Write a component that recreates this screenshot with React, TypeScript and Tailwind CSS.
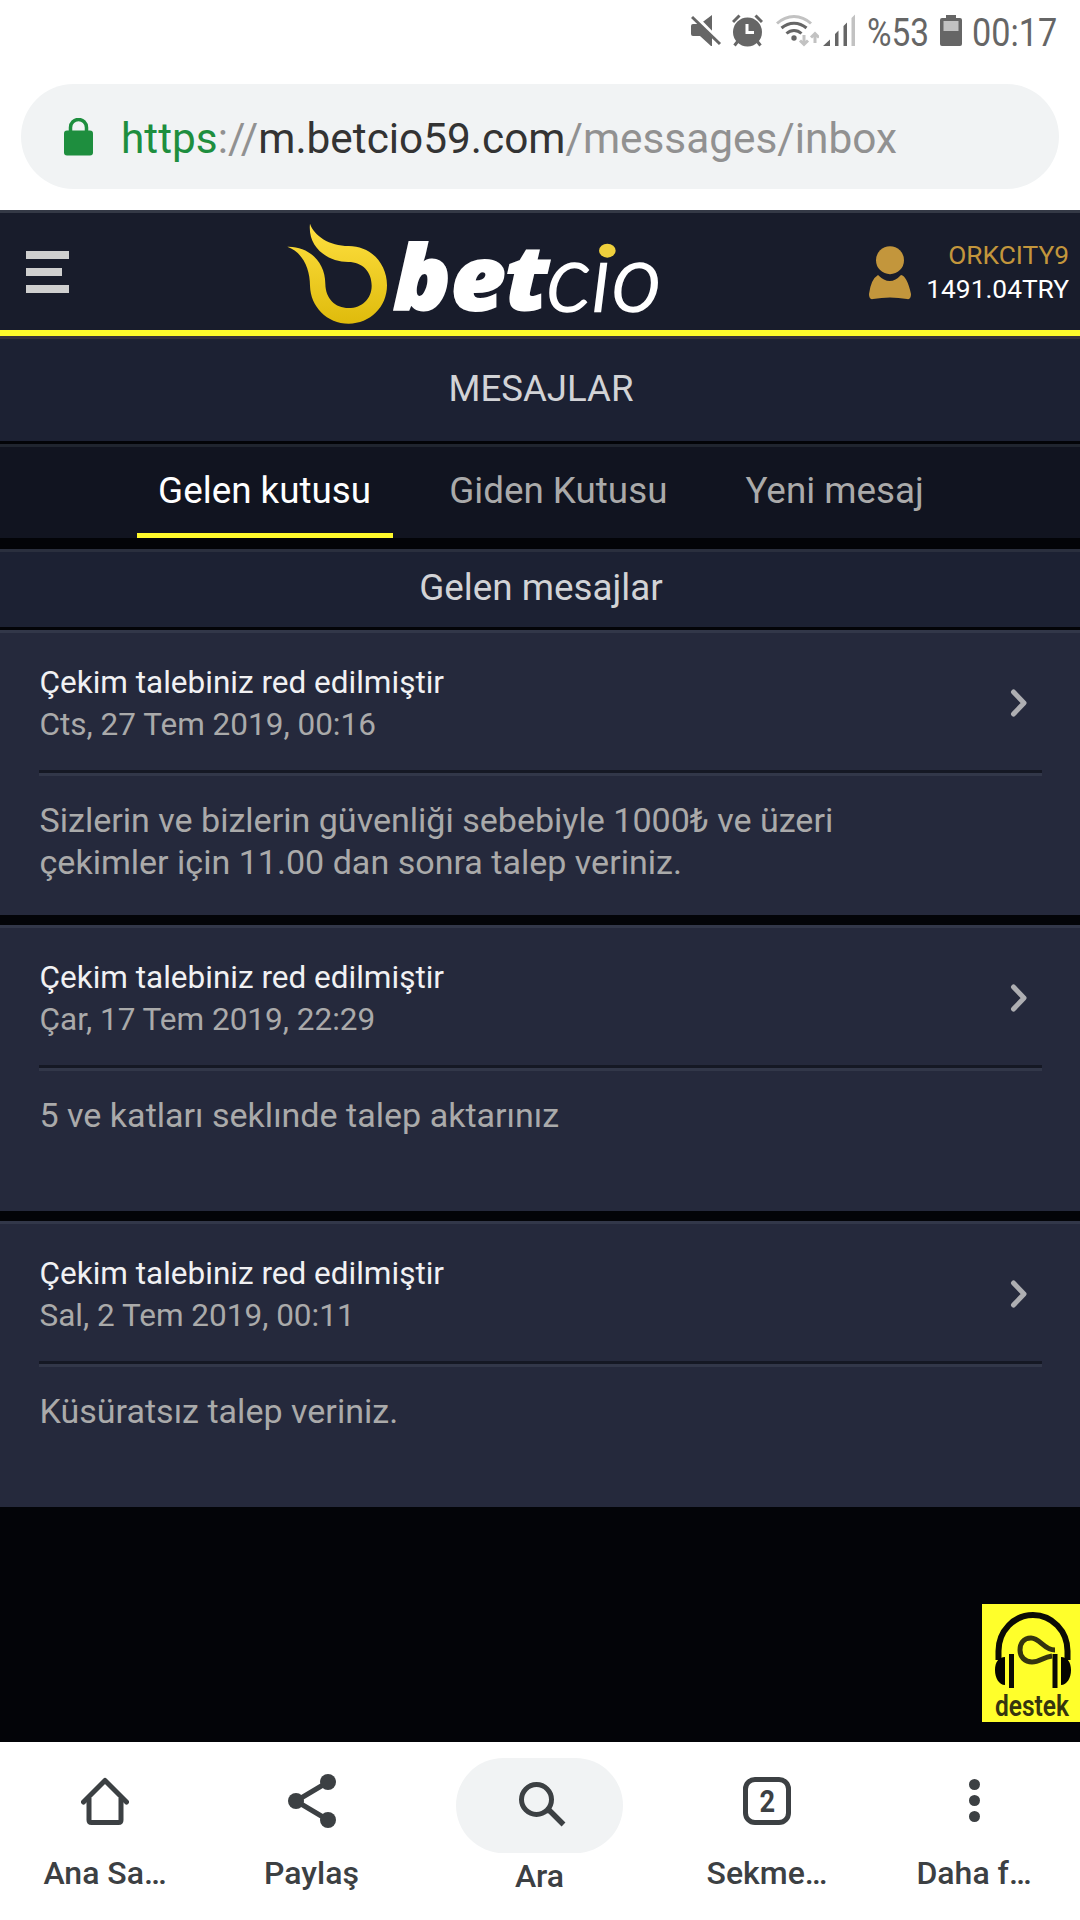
import type { ReactNode } from 'react';

type Message = {
  title: string;
  date: string;
  body: string;
};

const messages: Message[] = [
  {
    title: 'Çekim talebiniz red edilmiştir',
    date: 'Cts, 27 Tem 2019, 00:16',
    body: 'Sizlerin ve bizlerin güvenliği sebebiyle 1000₺ ve üzeri çekimler için 11.00 dan sonra talep veriniz.',
  },
  {
    title: 'Çekim talebiniz red edilmiştir',
    date: 'Çar, 17 Tem 2019, 22:29',
    body: '5 ve katları seklınde talep aktarınız',
  },
  {
    title: 'Çekim talebiniz red edilmiştir',
    date: 'Sal, 2 Tem 2019, 00:11',
    body: 'Küsüratsız talep veriniz.',
  },
];

function StatusBar() {
  return (
    <div className="flex h-[84px] items-start justify-end pr-[21px] pt-[14px] text-[38px] leading-[39px] text-[#666]">
      <svg className="mr-[10px] h-[33px] w-[31px]" viewBox="691 14 31 33" fill="#666">
        <path d="M691 26q0-2 2-2h7l12-9v31h-1l-11-10h-7q-2 0-2-2z" />
        <path d="M692 13l30 31" stroke="#fff" strokeWidth="4" />
        <path d="M692 17l28 27" stroke="#666" strokeWidth="3" />
      </svg>
      <svg className="mr-[13px] h-[33px] w-[31px]" viewBox="733 14 31 33" fill="none">
        <circle cx="748.5" cy="32" r="14.5" fill="#666" />
        <path d="M734 22l6.500-6.500M763 22l-6.500-6.500M739 41l-3.500 4.500M758 41l3.500 4.500" stroke="#666" strokeWidth="3" />
        <path d="M748 24v8.500h7" stroke="#fff" strokeWidth="3" />
      </svg>
      <svg className="mr-[4px] h-[33px] w-[43px]" viewBox="777 14 43 33" fill="none">
        <path d="M778 23.500c10-9.500 24-9.500 34 0" stroke="#c2c2c2" strokeWidth="3" />
        <path d="M782.500 28c7.500-6.500 17.500-6.500 25 0M787.500 33.500c4.500-4 10.500-4 15 0" stroke="#666" strokeWidth="3" />
        <circle cx="795" cy="38" r="2.700" fill="#666" />
        <path d="M805 35v9M801 40.500l4 4 4-4M816 43v-9M812 37.500l4-4 4 4" stroke="#c2c2c2" strokeWidth="3" />
      </svg>
      <svg className="mr-[11px] h-[33px] w-[33px]" viewBox="825 14 33 33">
        <path d="M825 46l7-6.500V46zM837 34l3.500-3.500V46H837zM845.500 26l3.500-3.500V46h-3.500z" fill="#666" />
        <path d="M853.500 18l3.500-3.500V46h-3.500z" fill="#c2c2c2" />
      </svg>
      <span className="w-[73px] origin-left scale-x-[0.88]">%53</span>
      <svg className="mr-[10px] h-[33px] w-[22px]" viewBox="944 14 22 33">
        <path d="M950 15h10v3h4q2 0 2 2v24q0 2-2 2h-18q-2 0-2-2V20q0-2 2-2h4z" fill="#666" />
        <path d="M947.500 21h15v10h-15z" fill="#c2c2c2" />
      </svg>
      <span className="w-[87px] origin-left scale-x-[0.9]">00:17</span>
    </div>
  );
}

function AddressBar() {
  return (
    <div className="mx-[21px] flex h-[105px] items-center rounded-full bg-[#f1f3f4] pl-[43px]">
      <svg className="mr-[28px] h-[38px] w-[29px]" viewBox="0 0 29 38">
        <path d="M6.500 14V9.500a8 8 0 0 1 16 0V14" fill="none" stroke="#1e8e3e" strokeWidth="3.500" />
        <rect y="12.500" width="29" height="25" rx="3" fill="#1e8e3e" />
      </svg>
      <span className="pt-[4px] whitespace-nowrap text-[42.35px] leading-[56px] text-[#919191]">
        <span className="text-[#1e8e3e]">https</span>://<span className="text-[#333]">m.betcio59.com</span>/messages/inbox
      </span>
    </div>
  );
}

function Logo() {
  return (
    <svg className="h-[120px] w-[400px] overflow-visible" viewBox="0 19 1200 360">
      <defs>
        <linearGradient id="flame" x1="0" y1="0" x2="0" y2="1">
          <stop offset="0" stopColor="#ffe040" />
          <stop offset="1" stopColor="#dfbb0c" />
        </linearGradient>
      </defs>
      <path
        d="M120 54C132 90 178 121 236 121C302 121 351 173 351 239C351 304 300 354 236 354C171 354 121 302 120 240C120 190 98 139 52 123C116 121 166 168 166 235C167 279 195 307 236 307C276 307 305 279 305 240C305 198 277 169 235 169C173 169 112 125 120 54Z"
        fill="url(#flame)"
      />
      <g fill="#fff" stroke="#fff">
        <text
          x="370"
          y="314"
          textLength="466"
          lengthAdjust="spacingAndGlyphs"
          strokeWidth="6"
          className="font-['Open_Sans'] text-[266px] font-extrabold italic"
        >
          bet
        </text>
        <text
          x="830"
          y="315"
          textLength="345"
          lengthAdjust="spacingAndGlyphs"
          strokeWidth="7"
          className="font-['Lato'] text-[284px] font-light italic"
        >
          cıo
        </text>
      </g>
      <ellipse cx="1012" cy="135" rx="25" ry="21" fill="#efd03d" />
    </svg>
  );
}

function Header() {
  return (
    <header className="flex h-[126px] items-center justify-between border-t-[3px] border-b-[6px] border-t-[#343946] border-b-[#fff92b] bg-[#181c2b] pr-[11px] pl-[26px]">
      <div className="flex w-[244px] flex-col gap-[9px] pt-px">
        <div className="h-[8px] w-[43px] bg-[#cfcfcf]" />
        <div className="h-[8px] w-[36px] bg-[#cfcfcf]" />
        <div className="h-[8px] w-[43px] bg-[#cfcfcf]" />
      </div>
      <Logo />
      <div className="flex flex-1 items-center justify-end gap-[15px]">
        <svg className="mt-[2px] h-[54px] w-[42px]" viewBox="0 0 42 54" fill="#c3963c">
          <circle cx="21" cy="14.200" r="14" />
          <path d="M9 29Q21 41 32 29Q38 30 42 48Q42 54 38 53Q21 50 4 53Q0 54 0 48Q2 33 9 29Z" />
        </svg>
        <div className="text-right text-[26.3px] leading-[34px]">
          <div className="text-[#c3963c]">ORKCITY9</div>
          <div className="text-white">1491.04TRY</div>
        </div>
      </div>
    </header>
  );
}

function Tabs() {
  const tab = 'border-b-[5px] px-[21.5px]';
  return (
    <div className="flex h-[94px] justify-center gap-[35px] border-t-[3px] border-[#20252f] bg-[#111420] pl-[2px] text-[36.8px] leading-[86px] text-[#aaa]">
      <div className={`${tab} border-[#fff92b] text-white`}>
        <div className="h-[86px] pt-px">Gelen kutusu</div>
      </div>
      <div className={`${tab} border-transparent`}>
        <div className="h-[86px] pt-px">Giden Kutusu</div>
      </div>
      <div className={`${tab} border-transparent`}>
        <div className="h-[86px] pt-px">Yeni mesaj</div>
      </div>
    </div>
  );
}

function MessageCard({ message }: { message: Message }) {
  return (
    <div className="h-[286px] border-t-[3px] border-[#323749] bg-[#25293c] pr-[38px] pl-[39px] pt-[29px] first:h-[285px]">
      <div className="flex items-center justify-between pr-[13px]">
        <div className="pl-[0.5px] text-[31.5px] leading-[42px]">
          <div className="text-[#f1f1f3]">{message.title}</div>
          <div className="text-[#aaa]">{message.date}</div>
        </div>
        <svg className="mb-[3px] h-[30px] w-[20px]" viewBox="0 0 20 30">
          <path d="M4.500 4l10.500 11L4.500 26" fill="none" stroke="#aeaeb2" strokeWidth="5" strokeLinecap="round" strokeLinejoin="round" />
        </svg>
      </div>
      <div className="mt-[24px] h-[6px] border-t-[3px] border-b-[3px] border-t-[#151824] border-b-[#323749]" />
      <p className="mt-[23px] w-[860px] pl-[0.5px] text-[34.05px] leading-[42px] text-[#aaa]">{message.body}</p>
    </div>
  );
}

function Support() {
  return (
    <div className="absolute right-0 bottom-[20px] h-[118px] w-[98px] bg-[#ffff2b]">
      <svg className="h-[118px] w-[98px] overflow-visible" viewBox="0 0 98 118" fill="none">
        <path d="M16.500 56V47A34.500 36 0 0 1 85.500 47V56" stroke="#0b0b05" strokeWidth="6" />
        <path d="M23 53v28C17 81 13 74 13 66s4-13 10-13zM79 53v28c6 0 10-7 10-15s-4-13-10-13z" fill="#050500" />
        <path d="M29.500 50v34M73 50v34" stroke="#0b0b05" strokeWidth="5" />
        <path d="M73 46C62 46 58 34 49 34C41 34 38 40 38 46C38 53 43 58 50 58C58 58 61 53 70 52" stroke="#35350f" strokeWidth="5" />
        <text
          x="13"
          y="112"
          textLength="74"
          lengthAdjust="spacingAndGlyphs"
          fill="#35350f"
          className="font-['Roboto'] text-[29px] font-semibold"
        >
          destek
        </text>
      </svg>
    </div>
  );
}

function NavItem({ label, className, children }: { label: string; className: string; children: ReactNode }) {
  return (
    <div className={`flex flex-col items-center ${className}`}>
      <div className="flex h-[117px] items-center">{children}</div>
      <div className="whitespace-nowrap">{label}</div>
    </div>
  );
}

function BottomNav() {
  return (
    <nav className="flex h-[178px] bg-white text-[32px] leading-[28px] font-medium text-[#3c4043]">
      <NavItem label="Ana Sa…" className="w-[210px]">
        <svg className="h-[48px] w-[48px]" viewBox="82 1776 48 48" fill="none" stroke="#3c4043" strokeWidth="5" strokeLinejoin="round">
          <path d="M84.500 1801l21.500-21.500 21.500 21.500" strokeLinecap="round" />
          <path d="M90 1797v22q0 2.500 2.500 2.500h27q2.500 0 2.500-2.500v-22" />
        </svg>
      </NavItem>
      <NavItem label="Paylaş" className="w-[203px]">
        <svg className="h-[54px] w-[48px]" viewBox="0 0 48 54" fill="#3c4043">
          <path d="M40 8L8 27l32 19" fill="none" stroke="#3c4043" strokeWidth="5" />
          <circle cx="40" cy="8" r="8" />
          <circle cx="8" cy="27" r="8" />
          <circle cx="40" cy="46" r="8" />
        </svg>
      </NavItem>
      <NavItem label="Ara" className="w-[253px] pt-[3px]">
        <div className="mt-[3px] flex h-[95px] w-[167px] items-center justify-center rounded-full bg-[#f1f3f4]">
          <svg className="ml-[5px] h-[48px] w-[48px]" viewBox="0 0 48 48" fill="none" stroke="#3c4043">
            <circle cx="18.500" cy="18.500" r="15" strokeWidth="5" />
            <path d="M28 29l4 1 13.500 13.500" strokeWidth="5.500" />
          </svg>
        </div>
      </NavItem>
      <NavItem label="Sekme…" className="w-[202px]">
        <div className="flex h-[48px] w-[48px] items-center justify-center rounded-[12px] border-[5px] border-[#3c4043] text-[32px] font-bold">
          <span className="scale-x-[0.85]">2</span>
        </div>
      </NavItem>
      <NavItem label="Daha f…" className="w-[212px]">
        <div className="flex flex-col gap-[5px]">
          <div className="size-[11px] rounded-full bg-[#3c4043]" />
          <div className="size-[11px] rounded-full bg-[#3c4043]" />
          <div className="size-[11px] rounded-full bg-[#3c4043]" />
        </div>
      </NavItem>
    </nav>
  );
}

export default function App() {
  return (
    <div className="flex h-[1920px] w-[1080px] flex-col overflow-hidden bg-white font-['Roboto',sans-serif]">
      <StatusBar />
      <AddressBar />
      <main className="relative mt-[21px] flex-1 bg-[#030408]">
        <Header />
        <h1 className="h-[105px] border-t-[3px] border-[#38313a] bg-[#1c2133] pl-[2px] text-center text-[36.6px] leading-[99px] text-[#d2d3d6]">
          MESAJLAR
        </h1>
        <div className="mt-[3px]">
          <Tabs />
        </div>
        <h2 className="mt-[11px] h-[78px] border-t-[3px] border-[#2a2f3e] bg-[#1c2133] pl-[2px] text-center text-[36.8px] leading-[72px] text-[#d2d3d6]">
          Gelen mesajlar
        </h2>
        <div className="mt-[3px] flex flex-col gap-[10px]">
          {messages.map((m) => (
            <MessageCard key={m.date} message={m} />
          ))}
        </div>
        <Support />
      </main>
      <BottomNav />
    </div>
  );
}
